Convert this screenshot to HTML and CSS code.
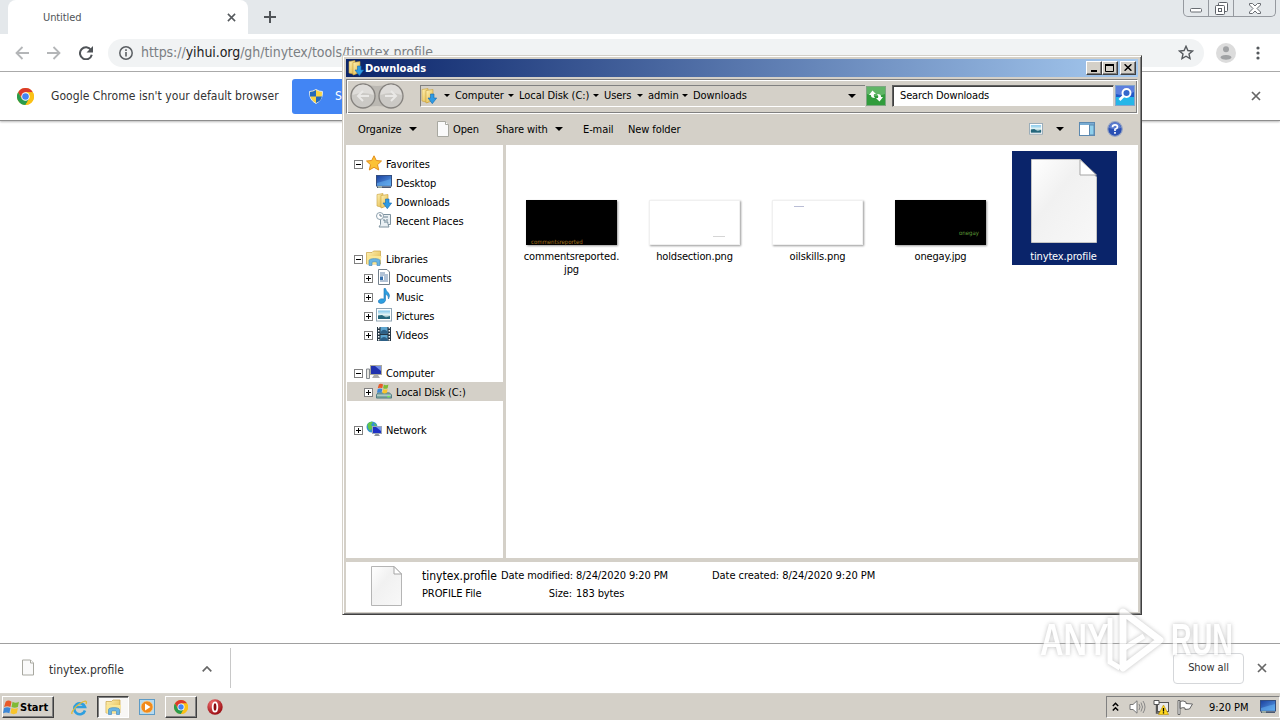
FILE: index.html
```html
<!DOCTYPE html>
<html>
<head>
    <meta charset="utf-8">
    <title>Untitled</title>
    <link rel="stylesheet" href="styles.css">
</head>
<body>
<svg class="defs" width="0" height="0">
    <defs>
        <linearGradient id="gPage" x1="0" y1="0" x2="1" y2="1"><stop offset="0" stop-color="#fff"/><stop offset=".4" stop-color="#f1f1f1"/><stop offset="1" stop-color="#f8f8f8"/></linearGradient>
        <linearGradient id="gFold" x1="0" y1="0" x2="1" y2="1"><stop offset="0" stop-color="#fff3b8"/><stop offset="1" stop-color="#e0b440"/></linearGradient>
        <linearGradient id="gBlue" x1="0" y1="0" x2="1" y2="1"><stop offset="0" stop-color="#1a3f9c"/><stop offset="1" stop-color="#5ba4ee"/></linearGradient>
        <linearGradient id="gSky" x1="0" y1="0" x2="0" y2="1"><stop offset="0" stop-color="#7cc4ea"/><stop offset=".5" stop-color="#e6f5f5"/><stop offset="1" stop-color="#2b6e80"/></linearGradient>
        <radialGradient id="gRed" cx=".35" cy=".25" r=".8"><stop offset="0" stop-color="#f07070"/><stop offset="1" stop-color="#98090f"/></radialGradient>
    </defs>
    <symbol id="page" viewBox="0 0 66 84"><path d="M.5.5H49L65.500 18V83.500H.5Z" fill="url(#gPage)" stroke="#c4c4c4"/><path d="M49 .5V16H65.500Z" fill="#fff" stroke="#a5a5a5"/></symbol>
    <symbol id="smallpage" viewBox="0 0 14 16"><path d="M1.500.5H9.500L12.500 3.500V15.500H1.500Z" fill="#fafafa" stroke="#a8a8a0"/><path d="M9.500.5V3.500H12.500" fill="#fff" stroke="#a8a8a0"/></symbol>
    <symbol id="chrome" viewBox="0 0 16 16"><circle cx="8" cy="8" r="8" fill="#fbc116"/><path d="M8 4H14.930A8 8 0 0 0 1.070 4L4.540 10Z" fill="#db3a2c"/><path d="M1.070 4A8 8 0 0 0 8 16L11.460 10 4.540 10Z" fill="#2a9c4c"/><path d="M11.460 10 8 16A8 8 0 0 0 14.930 4H8Z" fill="#fbc116"/><circle cx="8" cy="8" r="4" fill="#fff"/><circle cx="8" cy="8" r="3.100" fill="#4285f4"/></symbol>
    <symbol id="dlfolder" viewBox="0 0 16 16"><path d="M1 1.500 7 .5V14.500L1 13Z" fill="url(#gFold)" stroke="#c79e38" stroke-width=".6"/><path d="M5 2.500 12 1.500V12.500L5 15Z" fill="url(#gFold)" stroke="#c79e38" stroke-width=".6"/><path d="M9.500 6H13V10H15.700L11.300 15.700 7 10H9.500Z" fill="#2e9be4" stroke="#1669ae" stroke-width=".6"/></symbol>
    <symbol id="folder" viewBox="0 0 16 16"><path d="M.5 2.500H6L7.500 1H14.500V14H.5Z" fill="url(#gFold)" stroke="#c9a243" stroke-width=".7"/><path d="M1 6H15.500L14 14H1Z" fill="#fbe795"/><path d="M3 15.500V10.500C3 8 14 8 14 10.500V15.500H11V12.500C11 11.500 6 11.500 6 12.500V15.500Z" fill="#69b5e4" stroke="#3b83b8" stroke-width=".6"/></symbol>
    <symbol id="screen" viewBox="0 0 16 14"><rect x=".5" y=".5" width="15" height="10.500" fill="url(#gBlue)" stroke="#344f80"/><path d="M1 8 15 4V11H1Z" fill="#69b8f3" opacity=".5"/><path d="M1 11.500H15V13H1Z" fill="#4b5870"/><path d="M2 12H6" stroke="#d5e8c0"/></symbol>
    <symbol id="picture" viewBox="0 0 16 14"><rect x=".5" y=".5" width="15" height="12.500" fill="#fff" stroke="#8fa5b4"/><rect x="2" y="2.500" width="12" height="8.500" fill="url(#gSky)"/><path d="M2 11V7.500L6 7 10 9.500 14 8V11Z" fill="#25677c"/></symbol>
    <symbol id="winflag" viewBox="0 0 16 16"><path d="M2.500 2.500Q5 .5 8 2.500L7 7.500Q4 6 1 7.500Z" fill="#e85a29"/><path d="M9 2.700Q12 4.500 15 2.500L14 7.500Q11 9 8 7.500Z" fill="#7fba35"/><path d="M1 8.500Q4 7 7 8.500L6 13.500Q3 12 0 13.500Z" fill="#3c87d6"/><path d="M8 8.500Q11 10 14 8.500L13 13.500Q10 15 7 13.500Z" fill="#f8c42b"/></symbol>
    <symbol id="cross" viewBox="0 0 10 10"><path d="M1 1 9 9M9 1 1 9" stroke="currentColor" stroke-width="1.700" fill="none"/></symbol>
</svg>

<div class="screen">
    <!-- browser -->
    <div class="tabstrip">
        <div class="tab"><span>Untitled</span><svg width="9" height="9"><use href="#cross"/></svg></div>
        <svg class="newtab" width="12" height="12" viewBox="0 0 12 12"><path d="M6 0V12M0 6H12" stroke="#505458" stroke-width="2"/></svg>
        <div class="winbtns">
            <div class="wb"><svg width="12" height="5"><rect x=".5" y=".5" width="11" height="3.500" rx="1" fill="#fff" stroke="#696d73"/></svg></div>
            <div class="wb"><svg width="13" height="13" fill="#fff" stroke="#5d6168"><rect x="3.500" y=".5" width="9" height="9" rx="1"/><rect x=".5" y="3.500" width="9" height="9" rx="1"/><rect x="3.500" y="6.500" width="3" height="3"/></svg></div>
            <div class="wb wide"><svg width="12" height="11" viewBox="0 0 12 11"><path d="M.5.5H3.500L6 3 8.500.5H11.500V2L8 5.500 11.500 9V10.500H8.500L6 8 3.500 10.500H.5V9L4 5.500 .5 2Z" fill="#fff" stroke="#696d73"/></svg></div>
        </div>
    </div>
    <div class="navbar">
        <svg class="nback" width="14" height="14" viewBox="0 0 14 14"><path d="M14 7H1.500M7.500 1 1.500 7 7.500 13" fill="none" stroke="#b4b6b8" stroke-width="1.800"/></svg>
        <svg class="nfwd" width="14" height="14" viewBox="0 0 14 14"><path d="M0 7H12.500M6.500 1 12.500 7 6.500 13" fill="none" stroke="#b4b6b8" stroke-width="1.800"/></svg>
        <svg class="nreload" width="14" height="14" viewBox="0 0 14 14"><path d="M12 4A6 6 0 1 0 12.800 8.800" fill="none" stroke="#505458" stroke-width="2"/><path d="M14 0V6.500H7.500Z" fill="#505458"/></svg>
        <div class="omnibox">
            <svg width="14" height="14" viewBox="0 0 14 14"><circle cx="7" cy="7" r="6.200" fill="none" stroke="#5a5e62" stroke-width="1.500"/><path d="M7 6V10.500M7 3.300V5" stroke="#5a5e62" stroke-width="1.600"/></svg>
            <span class="url">https://<b>yihui.org</b>/gh/tinytex/tools/tinytex.profile</span>
            <svg class="star" width="16" height="15" viewBox="0 0 16 15"><path d="M8 1.300 9.900 5.500 14.500 6 11 9 12 13.500 8 11.200 4 13.500 5 9 1.500 6 6.100 5.500Z" fill="none" stroke="#55595d" stroke-width="1.400"/></svg>
        </div>
        <svg class="avatar" width="20" height="20" viewBox="0 0 20 20"><circle cx="10" cy="10" r="10" fill="#dcdcdc"/><circle cx="10" cy="6.200" r="3" fill="#a0a2a4"/><path d="M4.500 14.500C4.500 11 15.500 11 15.500 14.500 14 17.500 6 17.500 4.500 14.500Z" fill="#a0a2a4"/></svg>
        <svg class="dots" width="4" height="14" fill="#55595d"><circle cx="2" cy="2" r="1.600"/><circle cx="2" cy="7" r="1.600"/><circle cx="2" cy="12" r="1.600"/></svg>
    </div>
    <div class="infobar">
        <svg width="17" height="17"><use href="#chrome"/></svg>
        <span class="infotext">Google Chrome isn't your default browser</span>
        <div class="setdefault">
            <svg width="14" height="15" viewBox="0 0 14 15"><path d="M7 .5Q10 2.500 13.500 2.500 14 11 7 14.500 0 11 .5 2.500 4 2.500 7 .5Z" fill="#f8d444" stroke="#dde6ee"/><path d="M7 1V7.500H1Q.8 5 1 3 4 3 7 1ZM7 7.500H13Q12 12 7 14Z" fill="#2469ba"/></svg>
            <span>Set as default</span>
        </div>
        <svg class="infoclose" width="10" height="10"><use href="#cross"/></svg>
    </div>
    <div class="webpage"></div>
    <div class="shelf">
        <div class="dlitem">
            <svg width="14" height="17"><use href="#smallpage"/></svg>
            <span>tinytex.profile</span>
            <svg class="caret" width="10" height="6" viewBox="0 0 10 6"><path d="M.7 5.300 5 1 9.300 5.300" fill="none" stroke="#666" stroke-width="1.700"/></svg>
        </div>
        <div class="showall">Show all</div>
        <svg class="shelfclose" width="10" height="10"><use href="#cross"/></svg>
    </div>

    <!-- taskbar -->
    <div class="taskbar">
        <div class="start"><svg width="17" height="17"><use href="#winflag"/></svg><span>Start</span></div>
        <div class="task"><svg width="17" height="17" viewBox="0 0 17 17"><path d="M14 11.500A5.500 5.500 0 1 1 14 8H5" fill="none" stroke="#2f9fdf" stroke-width="2.600"/><path d="M1.500 14C-1 16 3 8 9 4.500 14 1 16.500 1.500 15 5" fill="none" stroke="#e3bb39" stroke-width="1.300"/></svg></div>
        <div class="task pressed"><svg width="17" height="16"><use href="#folder"/></svg></div>
        <div class="task"><svg width="16" height="16" viewBox="0 0 16 16"><rect x=".5" y=".5" width="15" height="15" fill="#b5daf1" stroke="#5d9bc6"/><circle cx="8" cy="8" r="6" fill="#f18a1c" stroke="#fbd190" stroke-width=".7"/><path d="M6 4.500 11.500 8 6 11.500Z" fill="#fff"/></svg></div>
        <div class="task raised"><svg width="14" height="14"><use href="#chrome"/></svg></div>
        <div class="task"><svg width="16" height="16" viewBox="0 0 16 16"><circle cx="8" cy="8" r="7.700" fill="url(#gRed)"/><ellipse cx="8" cy="8" rx="2.300" ry="4.700" fill="#8c0b10" stroke="#fff" stroke-width="1.800"/></svg></div>
        <div class="tray">
            <svg class="t1" width="7" height="10" viewBox="0 0 7 10"><path d="M.8 4 3.500 1.300 6.200 4M.8 8.500 3.500 5.800 6.200 8.500" fill="none" stroke="#000" stroke-width="1.500"/></svg>
            <svg class="t2" width="17" height="14" viewBox="0 0 17 14"><path d="M1 4.500H4L8 .8V13.200L4 9.500H1Z" fill="#fff" stroke="#777"/><path d="M10 4Q12 7 10 10M12 2.500Q15 7 12 11.500M14 1Q18 7 14 13" fill="none" stroke="#888"/></svg>
            <svg class="t3" width="16" height="15" viewBox="0 0 16 15"><rect x="4.500" y="2.500" width="11" height="9" fill="#e9e9e9" stroke="#555"/><path d="M1 .5H6V4.500H1Z" fill="#fff" stroke="#555"/><path d="M3.500 5V13H8" fill="none" stroke="#555" stroke-width="1.400"/><path d="M10.500 5 15.500 14.500H5.500Z" fill="#ffd91d" stroke="#b68a00" stroke-width=".6"/><path d="M10.500 8V11.500M10.500 12.300V13.500" stroke="#000" stroke-width="1.300"/></svg>
            <svg class="t4" width="17" height="15" viewBox="0 0 17 15"><path d="M1 .5H3V14.500H1ZM3 1.500Q6 0 9 2V3.500L15.500 4 12.500 9 8 9.500V8Q6 7 3 8.500Z" fill="#fff" stroke="#666"/></svg>
            <span class="clock">9:20 PM</span>
            <svg class="t5" width="16" height="14"><use href="#screen"/></svg>
        </div>
    </div>

    <!-- explorer window -->
    <div class="window">
        <div class="titlebar">
            <svg width="16" height="16"><use href="#dlfolder"/></svg>
            <span class="caption">Downloads</span>
            <div class="cb"><svg width="8" height="8"><path d="M1 7H7" stroke="#000" stroke-width="2"/></svg></div>
            <div class="cb"><svg width="9" height="8"><path d="M.5 1V7.500H8.500V1" fill="none" stroke="#000"/><path d="M0 1H9" stroke="#000" stroke-width="2"/></svg></div>
            <div class="cb last"><svg width="8" height="7" viewBox="0 0 8 7"><path d="M.6.3 7.400 6.700M7.400.3.6 6.700" stroke="#000" stroke-width="1.500"/></svg></div>
        </div>
        <div class="address">
            <svg class="travel" width="56" height="28" viewBox="0 0 56 28"><path d="M14 2Q28 6 42 2V26Q28 22 14 26Z" fill="#bbb8b2"/><g fill="#cbc9c5" stroke="#85827e" stroke-width="1.300"><circle cx="14" cy="14" r="12"/><circle cx="42" cy="14" r="12"/></g><path d="M3.500 13A10.500 10.500 0 0 1 24.500 13Q14 9 3.500 13ZM31.500 13A10.500 10.500 0 0 1 52.500 13Q42 9 31.500 13Z" fill="#dedcd9"/><path d="M20 14H9M14 9 9 14 14 19M36 14H47M42 9 47 14 42 19" fill="none" stroke="#e9e8e6" stroke-width="2"/></svg>
            <div class="crumbs">
                <svg class="cico" width="16" height="16"><use href="#dlfolder"/></svg>
                <i class="arr"></i><span class="c1">Computer</span>
                <i class="arr"></i><span class="c2">Local Disk (C:)</span>
                <i class="arr"></i><span class="c3">Users</span>
                <i class="arr"></i><span class="c4">admin</span>
                <i class="arr"></i><span>Downloads</span>
                <i class="arr big drop"></i>
            </div>
            <svg class="refresh" width="20" height="20" viewBox="0 0 20 20"><rect x=".5" y=".5" width="19" height="19" fill="#319c3c" stroke="#7ea682"/><path d="M1 1H19V8Q10 12 1 8Z" fill="#75c177" opacity=".7"/><path d="M3 9 6.500 4.500 10 8H8Q7 10 9 12 4.500 12 5 9ZM17 11 13.500 15.500 10 12H12Q13 10 11 8 15.500 8 15 11Z" fill="#fff"/></svg>
            <div class="search">Search Downloads</div>
            <svg class="go" width="20" height="21" viewBox="0 0 20 21"><rect x=".5" y=".5" width="19" height="20" fill="#2259c8" stroke="#83a5cc"/><path d="M1 12H19V20H1Z" fill="#25b6e8"/><path d="M1 1H19V7Q10 12 1 9Z" fill="#5d7fdd"/><circle cx="11.500" cy="8" r="4" fill="#3568cc" stroke="#fff" stroke-width="1.900"/><path d="M8.500 11 4.500 15" stroke="#fff" stroke-width="2.600"/></svg>
        </div>
        <div class="commands">
            <span class="k1">Organize</span><i class="arr big"></i>
            <svg class="kico" width="14" height="16"><use href="#smallpage"/></svg><span class="k2">Open</span>
            <span class="k3">Share with</span><i class="arr big"></i>
            <span class="k4">E-mail</span>
            <span class="k5">New folder</span>
            <svg class="view" width="14" height="12"><use href="#picture"/></svg>
            <i class="arr big"></i>
            <svg class="pane" width="16" height="14" viewBox="0 0 16 14"><rect x=".5" y=".5" width="15" height="13" fill="#fff" stroke="#5c89b0"/><path d="M1 2H15" stroke="#78abd2" stroke-width="2"/><rect x="10.500" y="3" width="4.500" height="10" fill="#8fd0ec" stroke="#5c89b0"/></svg>
            <svg class="help" width="16" height="16" viewBox="0 0 16 16"><circle cx="8" cy="8" r="7.300" fill="#2a50b4" stroke="#97a5c3" stroke-width="1.200"/><path d="M2 7A6 5.500 0 0 1 14 7Q8 9 2 7Z" fill="#708fdc" opacity=".7"/><path d="M5.500 6.200Q5.500 3.800 8 3.800 10.500 3.800 10.500 6 10.500 7.300 8 8.300V10M8 11V12.800" fill="none" stroke="#fff" stroke-width="1.700"/></svg>
        </div>
        <div class="body">
            <div class="tree">
                <div class="row"><i class="box minus"></i><svg width="16" height="16" viewBox="0 0 16 16"><path d="M8 .8 10.300 5.500 15.500 6 11.500 9.700 12.700 15 8 12.300 3.300 15 4.500 9.700.5 6 5.700 5.500Z" fill="#fcc235" stroke="#e38e1a"/></svg><span>Favorites</span></div>
                <div class="row sub leaf"><svg width="16" height="14"><use href="#screen"/></svg><span>Desktop</span></div>
                <div class="row sub leaf"><svg width="16" height="16"><use href="#dlfolder"/></svg><span>Downloads</span></div>
                <div class="row sub leaf"><svg width="16" height="16" viewBox="0 0 16 16"><path d="M5 2.500H14.500V12.500H12L13 15H3L4.500 12.500V4Z" fill="#eaf0f4" stroke="#7e929f"/><path d="M7 5H12M7 8H9V11M11 7V11H12.500" fill="none" stroke="#6b8291"/><circle cx="4" cy="4" r="3.500" fill="#fff" stroke="#8ca0ad"/><path d="M4 2V4H6" fill="none" stroke="#657b8c"/></svg><span>Recent Places</span></div>
                <div class="row"></div>
                <div class="row"><i class="box minus"></i><svg width="16" height="16"><use href="#folder"/></svg><span>Libraries</span></div>
                <div class="row sub"><i class="box"></i><svg width="16" height="16" viewBox="0 0 16 16"><path d="M2.500.5H11L13.500 3V15.500H2.500Z" fill="#fff" stroke="#73808c"/><path d="M4 4H9M4 6H12M4 12H12M8 8H12M8 10H12" stroke="#6787ad"/><path d="M4 7.500H7V11H4Z" fill="#3872ae"/></svg><span>Documents</span></div>
                <div class="row sub"><i class="box"></i><svg width="16" height="16" viewBox="0 0 16 16"><path d="M8 .5H9.500Q10 3 12.500 5 14.500 7.500 12.500 11 13 7.500 9.500 6V12.500Q8.500 15.500 5 15.500 1.500 15 2.500 12.500 4 10 8 11Z" fill="#2d9fe0" stroke="#2072b4" stroke-width=".6"/></svg><span>Music</span></div>
                <div class="row sub"><i class="box"></i><svg width="16" height="14"><use href="#picture"/></svg><span>Pictures</span></div>
                <div class="row sub"><i class="box"></i><svg width="16" height="16" viewBox="0 0 16 16"><rect x="1" y="1" width="14" height="14" fill="#253644"/><path d="M4.500 1H11.500V7.500H4.500ZM4.500 9H11.500V15H4.500Z" fill="#5da5cf"/><path d="M4.500 6Q8 2 11.500 5.500V7.500H4.500ZM4.500 13Q8 9 11.500 13V15H4.500Z" fill="#2c5f86"/><path d="M2.700 1V15M13.300 1V15" stroke="#fff" stroke-width="1.400" stroke-dasharray="1.500 1.500"/></svg><span>Videos</span></div>
                <div class="row"></div>
                <div class="row"><i class="box minus"></i><svg width="16" height="14" viewBox="0 0 16 14"><path d="M.5 4H3.500V13.500H.5Z" fill="#e6e6e0" stroke="#858a90"/><rect x="4.500" y=".5" width="11" height="9" fill="#2132ae" stroke="#aaa99d"/><path d="M9 1H15V6Z" fill="#718de7"/><path d="M8 10H12L14 13H6Z" fill="#aaa"/></svg><span>Computer</span></div>
                <div class="row sub sel"><i class="box"></i><svg width="16" height="16" viewBox="0 0 17 16"><path d="M2 10H14L16.500 12V15.500H.5V12Z" fill="#7fa8a0" stroke="#4d7881"/><path d="M1 12.500H16" stroke="#c1d9d5"/><path d="M12 14H14.500" stroke="#6eee59" stroke-width="1.500"/><svg x="1" y="-1" width="13" height="13"><use href="#winflag"/></svg></svg><span>Local Disk (C:)</span></div>
                <div class="row"></div>
                <div class="row"><i class="box"></i><svg width="16" height="16" viewBox="0 0 16 16"><circle cx="6" cy="6" r="5.500" fill="#3392d3"/><path d="M1.500 3Q4 0 7 1L5 4 7 6 4 10 2 7ZM8 2 11 4 9 5Z" fill="#62c746"/><rect x="6.500" y="5.500" width="9" height="7" fill="#1f31c5" stroke="#9ca7b8"/><path d="M10 6H15V10Z" fill="#7598ed"/><path d="M9.500 13H12.500L14 15H8Z" fill="#8c939b"/></svg><span>Network</span></div>
            </div>
            <div class="files">
                <div class="file"><div class="thumb black"><em class="m1">commentsreported</em></div><span>commentsreported.<br>jpg</span></div>
                <div class="file"><div class="thumb"><em class="m2"></em></div><span>holdsection.png</span></div>
                <div class="file"><div class="thumb"><em class="m3"></em></div><span>oilskills.png</span></div>
                <div class="file"><div class="thumb black"><em class="m4">onegay</em></div><span>onegay.jpg</span></div>
                <div class="file chosen"><svg width="66" height="84"><use href="#page"/></svg><span>tinytex.profile</span></div>
            </div>
        </div>
        <div class="details">
            <svg width="31" height="40" viewBox="0 0 31 40"><path d="M.5.5H23L30.500 8V39.500H.5Z" fill="url(#gPage)" stroke="#b5b5b5"/><path d="M23 .5V8H30.500Z" fill="#fff" stroke="#a5a5a5"/></svg>
            <div class="dcol name"><span class="dname">tinytex.profile</span><span>PROFILE File</span></div>
            <div class="dcol lab"><span>Date modified:</span><span>Size:</span></div>
            <div class="dcol val"><span>8/24/2020 9:20 PM</span><span>183 bytes</span></div>
            <div class="dcol created"><span>Date created: 8/24/2020 9:20 PM</span></div>
        </div>
    </div>

    <!-- watermark -->
    <div class="mark">
        <span>ANY</span>
        <svg width="58" height="64" viewBox="0 0 58 64"><path d="M17 4 54 32 17 60Z" fill="none" stroke="#fff" stroke-width="7" stroke-linejoin="round"/><path d="M4 10V54L14 60M17 4V41L38 28" fill="none" stroke="#fff" stroke-width="5"/></svg>
        <span class="run">RUN</span>
    </div>
</div>
</body>
</html>
```

FILE: styles.css
```css
body {
    margin: 0;
    font-family: "DejaVu Sans Condensed", "DejaVu Sans", sans-serif;
    font-stretch: condensed;
    font-size: 11px;
    color: #000;
}

svg {
    display: block;
    flex: none;
}

.defs {
    position: absolute;
}

.screen {
    position: relative;
    width: 1280px;
    height: 720px;
    overflow: hidden;
    display: flex;
    flex-direction: column;
    background: #fff;
    white-space: nowrap;
}

/* browser */
.tabstrip {
    height: 34px;
    background: #e4e8eb;
    display: flex;
    flex: none;
}

.tab {
    box-sizing: border-box;
    width: 240px;
    margin-left: 8px;
    padding: 0 12px 0 35px;
    background: #fff;
    border-radius: 8px 8px 0 0;
    display: flex;
    align-items: center;
    justify-content: space-between;
    color: #505458;
}

.tab span { letter-spacing: -.1px; }
.tab svg { color: #55595d; }

.newtab {
    margin: 11px 0 0 16px;
}

.winbtns {
    display: flex;
    box-sizing: border-box;
    width: 93px;
    height: 17px;
    margin: 0 4px 0 auto;
    border: 1px solid #95999f;
    border-top: 0;
    border-radius: 0 0 5px 5px;
}

.wb {
    width: 24px;
    display: flex;
    align-items: center;
    justify-content: center;
    border-right: 1px solid #95999f;
}

.wb.wide {
    width: 41px;
    border-right: 0;
}

.wb:first-child {
    padding-top: 4px;
}

.navbar {
    height: 37px;
    flex: none;
    display: flex;
    align-items: center;
    border-bottom: 1px solid #a9a9a9;
}

.nback { margin-left: 15px; }
.nfwd { margin-left: 18px; }
.nreload { margin-left: 18px; }

.omnibox {
    box-sizing: border-box;
    width: 1096px;
    height: 28px;
    margin-left: 15px;
    padding: 0 10px 0 11px;
    border-radius: 14px;
    background: #f1f3f4;
    display: flex;
    align-items: center;
}

.url {
    margin: -2px 0 0 8px;
    font-size: 14px;
    letter-spacing: -.06px;
    color: #7b7f83;
}

.url b {
    font-weight: normal;
    color: #222;
}

.star { margin-left: auto; }
.avatar { margin-left: 12px; }
.dots { margin-left: 20px; }

.infobar {
    height: 48px;
    flex: none;
    display: flex;
    align-items: center;
    border-bottom: 1px solid #8e8e8e;
    box-shadow: 0 1px 2px #bbb;
    padding-left: 17px;
    color: #333;
}

.infotext {
    width: 241px;
    margin-left: 17px;
    font-size: 12px;
    letter-spacing: .05px;
}

.setdefault {
    display: flex;
    align-items: center;
    width: 110px;
    height: 35px;
    padding-left: 17px;
    border-radius: 3px;
    background: #4285f4;
    color: #fff;
    font-size: 12px;
}

.setdefault span {
    margin-left: 12px;
}

.infoclose {
    margin: 0 19px 0 auto;
    color: #666;
}

.webpage {
    flex: 1;
}

.shelf {
    height: 49px;
    flex: none;
    display: flex;
    align-items: center;
    border-top: 1px solid #a0a0a0;
}

.dlitem {
    display: flex;
    align-items: center;
    box-sizing: border-box;
    width: 231px;
    height: 40px;
    margin-bottom: 2px;
    padding: 0 18px 0 21px;
    border-right: 1px solid #c8c8c8;
    font-size: 12px;
    color: #333;
}

.dlitem span {
    margin: 4px 0 0 14px;
}

.caret { margin: 2px 0 0 auto; }

.showall {
    box-sizing: border-box;
    width: 71px;
    height: 31px;
    margin-left: auto;
    line-height: 27px;
    text-align: center;
    letter-spacing: -.1px;
    border: 1px solid #d5d7da;
    border-radius: 4px;
    color: #333;
}

.shelfclose {
    margin: 0 13px 2px 13px;
    color: #666;
}

/* taskbar */
.taskbar {
    height: 26px;
    flex: none;
    display: flex;
    align-items: center;
    background: #d4d0c8;
    border-top: 1px solid #d8d5ce;
    padding-left: 2px;
}

.start, .raised {
    box-sizing: border-box;
    border: 1px solid;
    border-color: #fff #404040 #404040 #fff;
    box-shadow: inset -1px -1px 0 #808080;
}

.start {
    display: flex;
    align-items: center;
    width: 52px;
    height: 22px;
    margin-right: 9px;
    font-weight: bold;
}

.task {
    box-sizing: border-box;
    width: 32px;
    height: 22px;
    margin-right: 2px;
    display: flex;
    align-items: center;
    justify-content: center;
}

.task.pressed {
    border: 1px solid;
    border-color: #404040 #fff #fff #404040;
    box-shadow: inset 1px 1px 0 #808080;
    background: #f8f7f5;
}

.tray {
    box-sizing: border-box;
    width: 174px;
    height: 22px;
    margin: 0 0 0 auto;
    border: 1px solid;
    border-color: #808080 #fff #fff #808080;
    display: flex;
    align-items: center;
}

.t1 { margin-left: 5px; }
.t2 { margin-left: 10px; }
.t3 { margin-left: 7px; }
.t4 { margin-left: 8px; }

.clock {
    margin-left: 15px;
    letter-spacing: -.05px;
}

.t5 { margin: 0 3px 0 auto; }

/* explorer window */
.window {
    position: absolute;
    left: 342px;
    top: 55px;
    width: 800px;
    height: 560px;
    box-sizing: border-box;
    padding: 2px 2px 1px 2px;
    border: 1px solid;
    border-color: #d4d0c8 #404040 #404040 #d4d0c8;
    box-shadow: inset 1px 1px 0 #fff, inset -1px -1px 0 #808080;
    background: #d4d0c8;
    display: flex;
    flex-direction: column;
}

.titlebar {
    display: flex;
    align-items: center;
    height: 18px;
    margin: 1px 1px 1px 1px;
    padding: 0 2px 0 2px;
    background: linear-gradient(90deg, #0a246a, #a6caf0);
}

.caption {
    margin: 0 auto 0 1px;
    color: #fff;
    font-weight: bold;
}

.cb {
    box-sizing: border-box;
    width: 16px;
    height: 14px;
    display: flex;
    align-items: center;
    justify-content: center;
    background: #d4d0c8;
    border: 1px solid;
    border-color: #fff #404040 #404040 #fff;
    box-shadow: inset -1px -1px 0 #808080;
}

.cb svg {
    margin: 0 1px 1px 0;
}

.cb.last { margin-left: 2px; }

.address {
    box-sizing: border-box;
    height: 35px;
    margin: 1px 1px 0 1px;
    padding: 0 1px 2px 2px;
    border: 1px solid;
    border-color: #808080 #fff #fff #808080;
    box-shadow: inset 1px 1px 0 #fff, inset -1px -1px 0 #808080;
    display: flex;
    align-items: center;
}

.crumbs {
    box-sizing: border-box;
    width: 445px;
    height: 22px;
    margin-left: 15px;
    border-top: 1px solid #808080;
    border-left: 1px solid #808080;
    border-bottom: 1px solid #fff;
    display: flex;
    align-items: center;
    letter-spacing: -.05px;
}

.arr {
    width: 0;
    height: 0;
    border: 3px solid transparent;
    border-top-color: #000;
    border-bottom: 0;
}

.arr.big {
    border-width: 4px 4px 0 4px;
}

.cico { margin-right: 7px; }

.crumbs span {
    box-sizing: border-box;
    padding-left: 5px;
}

.c1 { width: 58px; }
.c2 { width: 79px; }
.c3 { width: 38px; }
.c4 { width: 39px; }

.drop { margin: 0 9px 0 auto; }

.refresh { margin-left: 1px; }

.search {
    box-sizing: border-box;
    width: 222px;
    height: 22px;
    margin: 0 0 0 6px;
    padding-left: 7px;
    line-height: 20px;
    letter-spacing: -.15px;
    background: #fff;
    border: 1px solid;
    border-color: #606060 #d4d0c8 #d4d0c8 #606060;
    box-shadow: inset 1px 1px 0 #404040;
}

.go { margin-left: 1px; }

.commands {
    height: 31px;
    flex: none;
    display: flex;
    align-items: center;
    padding: 0 0 1px 13px;
    box-sizing: border-box;
    letter-spacing: -.1px;
}

.k1 { width: 51px; }
.kico { margin-left: 19px; }
.k2 { width: 43px; margin-left: 3px; }
.k3 { width: 59px; }
.k4 { width: 45px; margin-left: 20px; }
.view { margin: 0 13px 0 auto; }
.pane { margin-left: 15px; }
.help { margin: 0 16px 0 12px; }

.body {
    height: 413px;
    flex: none;
    display: flex;
    margin-right: 1px;
    background: #fff;
}

.tree {
    box-sizing: border-box;
    width: 161px;
    padding: 9px 0 0 1px;
    border-left: 1px solid #d4d0c8;
    border-right: 3px solid #d4d0c8;
}

.row {
    height: 19px;
    display: flex;
    align-items: center;
    padding-left: 7px;
}

.row.sub { padding-left: 17px; }
.row.leaf { padding-left: 29px; }
.row.sel { background: #d4d0c8; }

.row span {
    margin: 2px 0 0 4px;
    letter-spacing: -.1px;
}

.row svg { margin-bottom: 1px; }

.box {
    width: 7px;
    height: 7px;
    margin: 1px 3px 0 0;
    border: 1px solid #808080;
    background: linear-gradient(#000, #000) center / 5px 1px no-repeat, linear-gradient(#000, #000) center / 1px 5px no-repeat, #fff;
}

.box.minus {
    background: linear-gradient(#000, #000) center / 5px 1px no-repeat, #fff;
}

.files {
    display: grid;
    grid-template-columns: repeat(5, 105px);
    column-gap: 18px;
    align-content: start;
    padding: 6px 0 0 14px;
}

.file {
    display: flex;
    flex-direction: column;
    align-items: center;
    box-sizing: border-box;
    height: 114px;
    padding-right: 2px;
    text-align: center;
    line-height: 13px;
}

.thumb {
    position: relative;
    flex: none;
    box-sizing: border-box;
    width: 91px;
    height: 45px;
    margin-top: 49px;
    background: #fff;
    border: 1px solid #f0f0f0;
    box-shadow: 1px 1px 2px #999;
}

.thumb.black {
    background: #000;
    border-color: #000;
}

.file span {
    margin-top: 5px;
    letter-spacing: -.15px;
}

.thumb em {
    position: absolute;
    font-style: normal;
    font-size: 6px;
    line-height: 7px;
}

.m1 { left: 4px; bottom: -1px; color: #a3701c; }
.m2 { right: 14px; bottom: 7px; width: 12px; height: 1px; background: #d5d5d5; }
.m3 { left: 21px; top: 5px; width: 10px; height: 1px; background: #b9bdd5; }
.m4 { right: 6px; bottom: 8px; color: #5e9b38; }

.chosen {
    background: #0a246a;
    color: #fff;
}

.chosen svg { margin-top: 8px; }
.file.chosen span { margin-top: 7px; }

.details {
    box-sizing: border-box;
    height: 50px;
    flex: none;
    display: flex;
    margin: 4px 1px 0 1px;
    padding: 4px 0 0 25px;
    background: #fff;
}

.dcol {
    display: flex;
    flex-direction: column;
    padding-top: 1px;
    line-height: 18px;
    letter-spacing: -.1px;
}

.name {
    width: 79px;
    margin-left: 20px;
}

.dname {
    font-size: 12px;
    letter-spacing: 0;
}

.lab {
    width: 71px;
    text-align: right;
}

.val {
    width: 132px;
    margin-left: 4px;
}

.created {
    margin-left: 4px;
    letter-spacing: -.05px;
}

/* watermark */
.mark {
    position: absolute;
    left: 1040px;
    top: 608px;
    display: flex;
    align-items: center;
    color: #fff;
    font: bold 44px "Liberation Sans", sans-serif;
    opacity: .75;
    filter: drop-shadow(0 0 2px #aaa);
}

.mark span {
    width: 66px;
    transform: scaleX(.74);
    transform-origin: 0 50%;
}

.mark svg { margin-right: 7px; }

.mark .run { transform: scaleX(.65); }
```
